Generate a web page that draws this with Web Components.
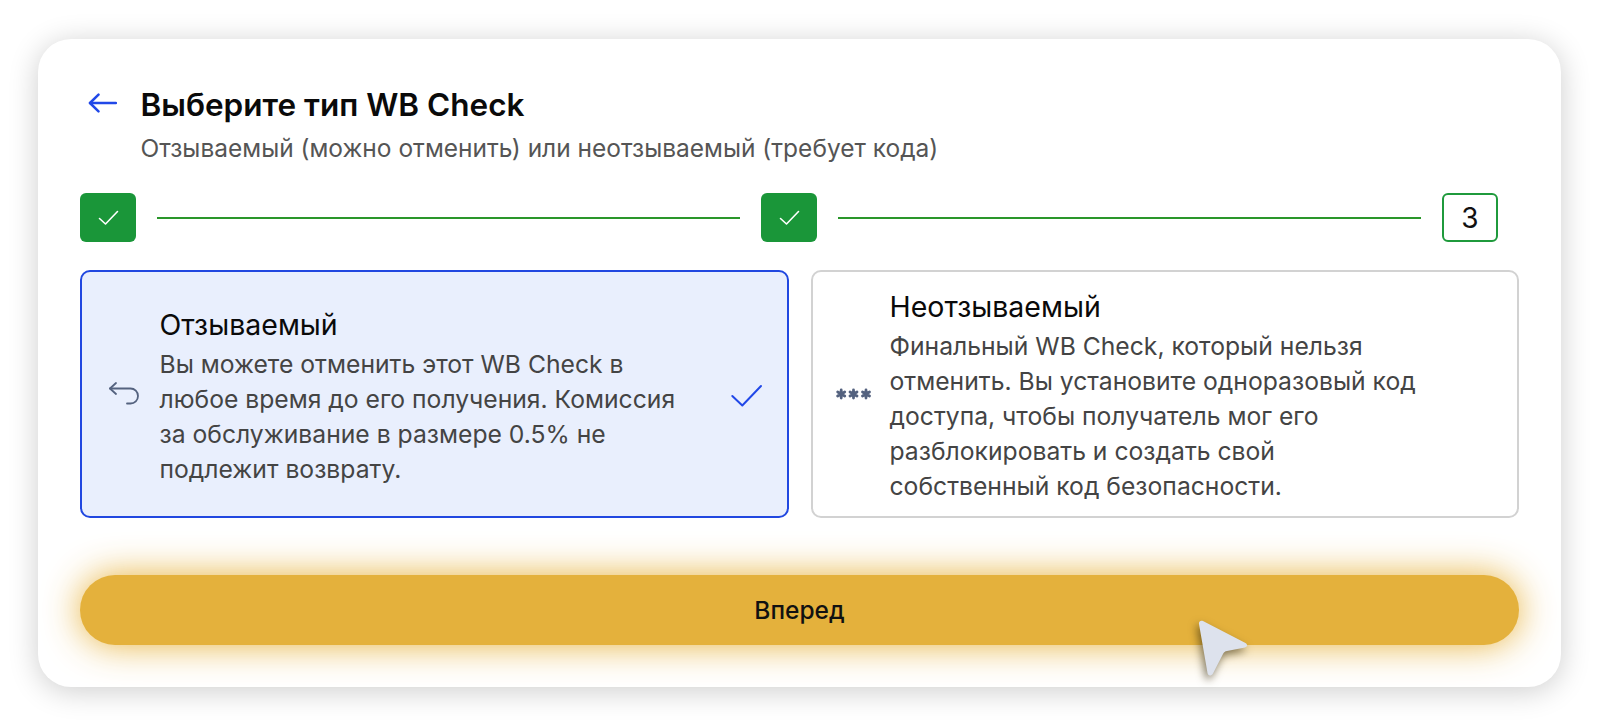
<!DOCTYPE html>
<html lang="ru">
<head>
<meta charset="utf-8">
<title>WB Check</title>
<style>
  html, body { margin: 0; background: #fff; }
  body { font-family: 'Inter', 'Noto Sans', sans-serif; font-optical-sizing: none; width: 1600px; height: 726px; overflow: hidden; }
</style>
</head>
<body>
<wb-dialog>
  <wb-header slot="header" title="Выберите тип WB Check" subtitle="Отзываемый (можно отменить) или неотзываемый (требует кода)"></wb-header>
  <wb-steps slot="steps"></wb-steps>
  <wb-option slot="options" selected heading="Отзываемый">
    <svg slot="icon" width="30" height="24" viewBox="0 0 30 24" fill="none" stroke="#54627f" stroke-width="1.800" stroke-linecap="round" stroke-linejoin="round"><path d="M7 1 1 6.500l6 5.500"/><path d="M1 6.500h20.500a7.500 7.500 0 0 1 0 15H18"/></svg>
    Вы можете отменить этот WB Check в любое время до его получения. Комиссия за обслуживание в размере 0.5% не подлежит возврату.
  </wb-option>
  <wb-option slot="options" heading="Неотзываемый">
    <svg slot="icon" width="36" height="12" viewBox="0 0 36 12" fill="none" stroke="#54627f" stroke-width="2.800" stroke-linecap="round"><path d="M5.200 2v8M1.700 4l7 4M8.700 4l-7 4"/><path d="M17.500 2v8M14 4l7 4M21 4l-7 4"/><path d="M30 2v8M26.500 4l7 4M33.500 4l-7 4"/></svg>
    Финальный WB Check, который нельзя отменить. Вы установите одноразовый код доступа, чтобы получатель мог его разблокировать и создать свой собственный код безопасности.
  </wb-option>
  <wb-button slot="action">Вперед</wb-button>
</wb-dialog>
<wb-cursor></wb-cursor>

<script>
class WbDialog extends HTMLElement {
  constructor() {
    super();
    this.attachShadow({ mode: 'open' });
    this.shadowRoot.innerHTML = `
      <style>
        :host {
          display: block;
          box-sizing: border-box;
          width: 1523px;
          height: 648px;
          margin: 39px 0 0 38px;
          padding: 43px 42px 0;
          background: #fff;
          border-radius: 33px;
          box-shadow: 0 4px 30px rgba(0, 0, 0, 0.2);
        }
        .options {
          display: grid;
          grid-template-columns: 1fr 1fr;
          gap: 22px;
          height: 248px;
          margin-top: 28px;
        }
        .action { margin-top: 57px; }
      </style>
      <slot name="header"></slot>
      <slot name="steps"></slot>
      <div class="options"><slot name="options"></slot></div>
      <div class="action"><slot name="action"></slot></div>
    `;
  }
}

class WbHeader extends HTMLElement {
  constructor() {
    super();
    this.attachShadow({ mode: 'open' });
    this.shadowRoot.innerHTML = `
      <style>
        :host { display: flex; height: 85px; margin-bottom: 26px; }
        .back { width: 60.500px; padding: 11px 0 0 7px; box-sizing: border-box; flex: none; }
        svg { display: block; }
        h1 { margin: 0; font-size: 31.500px; line-height: 46px; font-weight: 600; color: #0a0a0a; height: 46px; white-space: nowrap; }
        p { margin: 1px 0 0; font-size: 24.500px; line-height: 38px; color: #555; height: 38px; white-space: nowrap; }
      </style>
      <div class="back">
        <svg width="30" height="20" viewBox="0 0 30 20" fill="none" stroke="#2148e8" stroke-width="2.500" stroke-linecap="round" stroke-linejoin="round"><path d="M11.500 1.700 3 10l8.500 8.300"/><path d="M3 10h26"/></svg>
      </div>
      <div>
        <h1>${this.getAttribute('title')}</h1>
        <p>${this.getAttribute('subtitle')}</p>
      </div>
    `;
  }
}

class WbSteps extends HTMLElement {
  constructor() {
    super();
    this.attachShadow({ mode: 'open' });
    const check = `<svg width="21" height="16" viewBox="0 0 21 16" fill="none" stroke="#fff" stroke-width="1.600" stroke-linecap="round" stroke-linejoin="round"><path d="M1.500 8.500 7.500 14 19.500 1.500"/></svg>`;
    this.shadowRoot.innerHTML = `
      <style>
        :host { display: flex; align-items: center; gap: 21px; height: 49px; padding-right: 21px; }
        .step {
          box-sizing: border-box;
          width: 56px;
          height: 49px;
          flex: none;
          border-radius: 6px;
          display: flex;
          align-items: center;
          justify-content: center;
        }
        .done { background: #1a9639; }
        .now { background: #fff; border: 2px solid #1f9a3c; font-size: 28px; color: #111; }
        .line { flex: 1; height: 2px; background: #2a962a; }
      </style>
      <div class="step done">${check}</div>
      <div class="line"></div>
      <div class="step done">${check}</div>
      <div class="line"></div>
      <div class="step now">3</div>
    `;
  }
}

class WbOption extends HTMLElement {
  constructor() {
    super();
    this.attachShadow({ mode: 'open' });
    const sel = this.hasAttribute('selected');
    this.shadowRoot.innerHTML = `
      <style>
        :host {
          display: flex;
          align-items: center;
          box-sizing: border-box;
          height: 248px;
          border-radius: 10px;
          border: 2px solid ${sel ? '#2148e0' : '#d2d2d2'};
          background: ${sel ? '#e9effd' : '#fff'};
          padding-left: ${sel ? '27px' : '23px'};
        }
        .icon { flex: none; width: ${sel ? '50.500px' : '54px'}; display: flex; }
        .body { flex: none; width: ${sel ? '530px' : '540px'}; }
        h2 { margin: 0; font-size: 28.500px; line-height: 45px; font-weight: 400; color: #0a0a0a; }
        .text { font-size: 24.700px; line-height: 35px; color: #444; }
        .tick { flex: none; margin-left: auto; margin-right: 24px; position: relative; top: 2px; }
      </style>
      <div class="icon"><slot name="icon"></slot></div>
      <div class="body">
        <h2>${this.getAttribute('heading')}</h2>
        <div class="text"><slot></slot></div>
      </div>
      ${sel ? `<svg class="tick" width="33" height="24" viewBox="0 0 33 24" fill="none" stroke="#2148e8" stroke-width="2" stroke-linecap="round" stroke-linejoin="round"><path d="M2.300 12 12.300 21.500 31 2"/></svg>` : ''}
    `;
  }
}

class WbButton extends HTMLElement {
  constructor() {
    super();
    this.attachShadow({ mode: 'open' });
    this.shadowRoot.innerHTML = `
      <style>
        :host {
          display: flex;
          align-items: center;
          justify-content: center;
          height: 70px;
          border-radius: 35px;
          background: #e4b13c;
          box-shadow: 0 0 36px rgba(228, 170, 40, 0.9);
          font-size: 24.500px;
          font-weight: 500;
          color: #111;
        }
      </style>
      <slot></slot>
    `;
  }
}

class WbCursor extends HTMLElement {
  constructor() {
    super();
    this.attachShadow({ mode: 'open' });
    this.shadowRoot.innerHTML = `
      <style>
        :host { position: absolute; left: 1190px; top: 612px; display: block; }
        svg { display: block; overflow: visible; filter: drop-shadow(-2px 4px 4px rgba(50, 40, 10, 0.6)); }
      </style>
      <svg width="62" height="70" viewBox="0 0 62 70">
        <path d="M9 12C8.500 9 11 8 13 9L55.500 31C58 32.500 57.500 35 55 35.500L37 39C35 39.400 34 40 33 42L23 61.500C21 64.500 18 64 17.500 61Z" fill="#dde2ed"/>
      </svg>
    `;
  }
}

customElements.define('wb-dialog', WbDialog);
customElements.define('wb-header', WbHeader);
customElements.define('wb-steps', WbSteps);
customElements.define('wb-option', WbOption);
customElements.define('wb-button', WbButton);
customElements.define('wb-cursor', WbCursor);
</script>
</body>
</html>
